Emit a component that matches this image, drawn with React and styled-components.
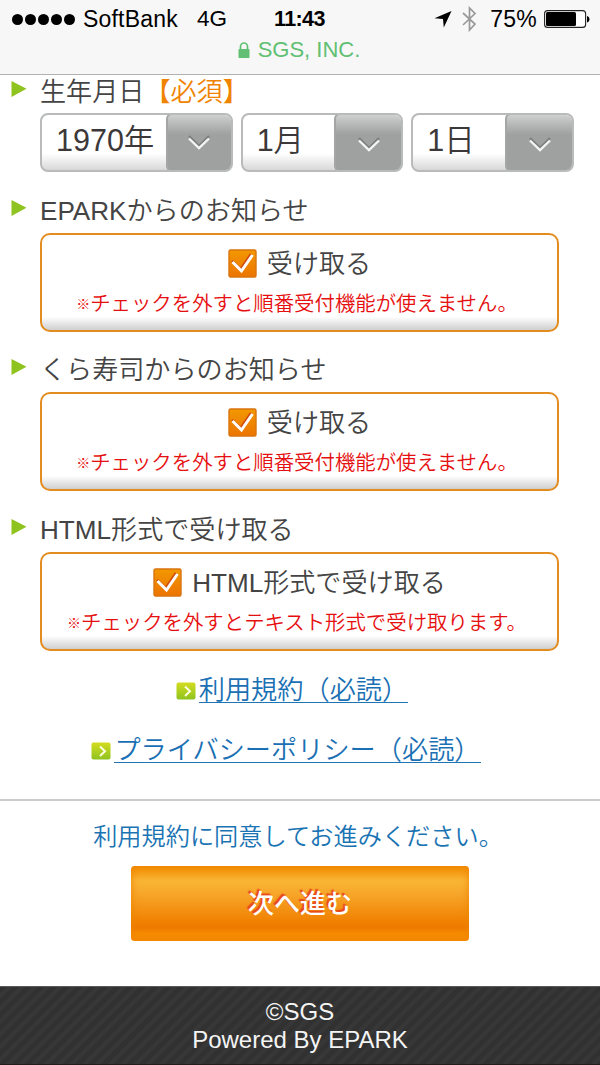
import React from 'react'
import styled, { createGlobalStyle } from 'styled-components'

const GlobalStyle = createGlobalStyle`
* {
  box-sizing: border-box;
}
body {
  margin: 0;
  background: #fff;
  color: #444;
  font-family: "Liberation Sans", "Noto Sans CJK JP", sans-serif;
  font-weight: 350;
}
`

const Page = styled.div`
width: 600px;
height: 1065px;
display: flex;
flex-direction: column;
overflow: hidden;
white-space: nowrap;
`

const Header = styled.header`
height: 75px;
flex: none;
background: #f7f7f7;
border-bottom: 1px solid #b2b2b2;
`

const StatusBar = styled.div`
display: grid;
grid-template-columns: 1fr 54px 1fr;
align-items: center;
height: 38px;
padding: 0 10px 0 12px;
color: #000;
font-size: 23px;
`

const StatusGroup = styled.div`
display: flex;
align-items: center;
justify-content: ${(props) => (props.$end ? 'flex-end' : 'flex-start')};
`

const Dots = styled.div`
display: flex;
gap: 2px;
margin-right: 8px;
`

const Dot = styled.span`
width: 11px;
height: 11px;
border-radius: 50%;
background: #000;
`

const Carrier = styled.span`
letter-spacing: 0.2px;
`

const Network = styled.span`
margin-left: 19px;
font-size: 22.5px;
`

const Clock = styled.span`
font-size: 21.5px;
font-weight: bold;
letter-spacing: -0.6px;
`

const Percent = styled.span`
margin: 0 7px 0 13px;
letter-spacing: 0.2px;
`

const BluetoothIcon = styled.svg`
width: 15px;
height: 26px;
margin-left: 10px;
`

const UrlBar = styled.div`
display: flex;
align-items: center;
justify-content: center;
gap: 8px;
height: 24px;
padding-right: 2px;
color: #61c073;
font-size: 22px;
`

const Main = styled.main`
flex: 1;
display: flex;
flex-direction: column;
`

const Field = styled.section`
height: ${(props) => props.$height}px;
padding: 0 26px 0 40px;
`

const Label = styled.h2`
display: flex;
align-items: center;
height: 34px;
margin: 0 0 0 -29px;
font-size: 26.1px;
font-weight: 350;
line-height: 30px;
`

const Marker = styled.svg`
width: 16px;
height: 18px;
margin: -6px 13px 0 0;
`

const Required = styled.span`
color: #f08300;
`

const Selects = styled.div`
display: flex;
gap: 8px;
margin-top: 4px;
`

const Select = styled.button`
display: flex;
justify-content: space-between;
width: ${(props) => props.$width}px;
height: 59px;
padding: 0;
overflow: hidden;
border: 2px solid #b9baba;
border-radius: 8px;
background: linear-gradient(#fff 0, #fff 70%, #d8d8d8 100%);
color: #3c3839;
font-family: inherit;
font-size: 30.5px;
font-weight: 350;
line-height: 51px;
text-align: left;
`

const SelectText = styled.span`
padding-left: 14px;
`

const SelectArrow = styled.span`
display: flex;
align-items: center;
justify-content: center;
width: ${(props) => props.$width}px;
height: 59px;
margin: -2px;
padding-top: ${(props) => props.$drop}px;
flex: none;
border: 2px solid #a4a6a5;
border-radius: 6px;
background: linear-gradient(#d0d0d0 0, #b5b6b6 18%, #9fa1a0 36%, #9fa1a0 100%);
`

const Box = styled.div`
display: flex;
flex-direction: column;
align-items: center;
width: 519px;
height: 99px;
margin-top: 5px;
padding-top: 11px;
border: 2px solid #e38c20;
border-radius: 10px;
background: linear-gradient(#fff 0, #fff 86%, #cfcfcf 100%);
`

const CheckLine = styled.label`
display: flex;
align-items: center;
gap: 10px;
height: 36px;
font-size: 26.1px;
line-height: 30px;
`

const CheckMark = styled.svg`
width: 29px;
height: 29px;
margin-top: -2px;
`

const Note = styled.p`
display: flex;
align-items: center;
height: 30px;
margin: 5px 5px 0 0;
color: #e60f0f;
font-size: 20.4px;
`

const NoteMark = styled.span`
width: 14px;
padding-top: 2px;
font-size: 14px;
font-weight: 700;
`

const LinkRow = styled.div`
display: flex;
justify-content: center;
align-items: center;
height: 60px;
padding-right: ${(props) => props.$shift}px;
gap: 3px;
`

const Link = styled.a`
height: 29px;
margin-top: -4px;
border-bottom: 1px solid #1f74b5;
color: #1a70b4;
font-size: 26.2px;
line-height: 33px;
`

const LinkIcon = styled.svg`
width: 20px;
height: 18px;
margin: 1px 0 0 -1px;
`

const Agree = styled.section`
display: flex;
flex-direction: column;
align-items: center;
height: 187px;
margin-top: auto;
border-top: 2px solid #ccc;
`

const AgreeText = styled.p`
height: 36px;
margin: 18px 0 11px;
padding-right: 4px;
color: #1a73b3;
font-size: 24.2px;
line-height: 36px;
`

const NextButton = styled.button`
width: 338px;
height: 75px;
padding: 0;
border: 0;
border-radius: 4px;
background: linear-gradient(#f28c00 0, #f9b535 20%, #f7a82c 35%, #f08000 75%, #ee7a00 82%, #f68b00 90%, #f68b00 100%);
box-shadow: inset 0 0 9px #ef8500;
color: #fff;
font-family: inherit;
font-size: 26px;
font-weight: 500;
line-height: 74px;
text-shadow: -2px -2px 1px #e8491c;
`

const Footer = styled.footer`
height: 79px;
flex: none;
padding-top: 11px;
border-top: 1px solid #5a5a5a;
border-bottom: 1px solid #221c1e;
background: repeating-linear-gradient(135deg, #313131 0, #313131 4px, #373737 5px, #373737 8px, #313131 9px);
color: #f4f4f4;
font-size: 24px;
line-height: 28px;
text-align: center;
`

const Chevron = () => (
  <svg width="24" height="20" viewBox="0 0 24 20" fill="none">
    <path d="M2 3l10 10L22 3" stroke="#7d7f7e" strokeWidth="2.4" />
    <path d="M2 5.5l10 9.5L22 5.5" stroke="#f4f4f4" strokeWidth="2.4" />
  </svg>
)

const FieldLabel = ({ children }) => (
  <Label>
    <Marker viewBox="0 0 16 18">
      <path d="M0.5 1L15.5 8.8L0.5 17z" fill="#8fc31f" />
    </Marker>
    <span>{children}</span>
  </Label>
)

const DateSelect = ({ text, width, arrow, drop }) => (
  <Select $width={width}>
    <SelectText>{text}</SelectText>
    <SelectArrow $width={arrow} $drop={drop}>
      <Chevron />
    </SelectArrow>
  </Select>
)

const CheckField = ({ title, text, note, height }) => (
  <Field $height={height}>
    <FieldLabel>{title}</FieldLabel>
    <Box>
      <CheckLine>
        <CheckMark viewBox="0 0 29 29">
          <defs>
            <linearGradient id="check" x1="0" y1="0" x2="0" y2="1">
              <stop offset="0" stopColor="#f39800" />
              <stop offset="1" stopColor="#ec7400" />
            </linearGradient>
          </defs>
          <rect x="1" y="1" width="27" height="27" rx="1.5" fill="url(#check)" stroke="#d9740f" strokeWidth="1.4" />
          <path d="M4 12L12.500 20.500L23 5" fill="none" stroke="#cf4a0c" strokeWidth="2.6" />
          <path d="M4.500 13L13.500 22L24.500 6" fill="none" stroke="#fff" strokeWidth="3" />
        </CheckMark>
        <span>{text}</span>
      </CheckLine>
      <Note>
        <NoteMark>※</NoteMark>
        {note}
      </Note>
    </Box>
  </Field>
)

const IconLink = ({ shift, children }) => (
  <LinkRow $shift={shift}>
    <LinkIcon viewBox="0 0 20 18">
      <defs>
        <linearGradient id="link" x1="0" y1="0" x2="0" y2="1">
          <stop offset="0" stopColor="#d4dc20" />
          <stop offset="1" stopColor="#8ec31f" />
        </linearGradient>
      </defs>
      <rect x="0.5" y="0.5" width="19" height="17" rx="2" fill="url(#link)" />
      <path d="M9 4.5l5 4.8l-5 4.7" fill="none" stroke="#fffde0" strokeWidth="2" />
    </LinkIcon>
    <Link>{children}</Link>
  </LinkRow>
)

const App = () => {
  return (
    <>
      <GlobalStyle />
      <Page>
        <Header>
          <StatusBar>
            <StatusGroup>
              <Dots>
                {[1, 2, 3, 4, 5].map((n) => (
                  <Dot key={n} />
                ))}
              </Dots>
              <Carrier>SoftBank</Carrier>
              <Network>4G</Network>
            </StatusGroup>
            <Clock>11:43</Clock>
            <StatusGroup $end>
              <svg width="18" height="17" viewBox="0 0 18 17">
                <path d="M17.5 0L9.8 16.5L9 8L0.5 7.2z" fill="#000" />
              </svg>
              <BluetoothIcon viewBox="0 0 15 26">
                <path d="M1 7l12 11l-5.5 6V2l5.5 5.5L1 19" fill="none" stroke="#999" strokeWidth="1.7" />
              </BluetoothIcon>
              <Percent>75%</Percent>
              <svg width="46" height="18" viewBox="0 0 46 18">
                <rect x="0.6" y="0.6" width="41" height="16.8" rx="3" fill="#fff" stroke="#222" strokeWidth="1.1" />
                <rect x="2" y="2" width="30" height="14" rx="1.5" fill="#000" />
                <path d="M43 6c3.3 1 3.3 5.5 0 6.5z" fill="#000" />
              </svg>
            </StatusGroup>
          </StatusBar>
          <UrlBar>
            <svg width="12" height="16" viewBox="0 0 12 16">
              <path d="M2.5 8V4.5a3.5 3.5 0 0 1 7 0V8" fill="none" stroke="#61c073" strokeWidth="1.7" />
              <rect x="0.5" y="7" width="11" height="9" rx="0.8" fill="#61c073" />
            </svg>
            <span>SGS, INC.</span>
          </UrlBar>
        </Header>

        <Main>
          <Field $height={119}>
            <FieldLabel>
              生年月日
              <Required>【必須】</Required>
            </FieldLabel>
            <Selects>
              <DateSelect text="1970年" width={193} arrow={67} drop={0} />
              <DateSelect text="1月" width={163} arrow={69} drop={5} />
              <DateSelect text="1日" width={163} arrow={69} drop={5} />
            </Selects>
          </Field>
          <CheckField height={159} title="EPARKからのお知らせ" text="受け取る" note="チェックを外すと順番受付機能が使えません。" />
          <CheckField height={160} title="くら寿司からのお知らせ" text="受け取る" note="チェックを外すと順番受付機能が使えません。" />
          <CheckField height={147} title="HTML形式で受け取る" text="HTML形式で受け取る" note="チェックを外すとテキスト形式で受け取ります。" />
          <IconLink shift={15}>利用規約（必読）</IconLink>
          <IconLink shift={27}>プライバシーポリシー（必読）</IconLink>
          <Agree>
            <AgreeText>利用規約に同意してお進みください。</AgreeText>
            <NextButton>次へ進む</NextButton>
          </Agree>
        </Main>

        <Footer>
          <div>©SGS</div>
          <div>Powered By EPARK</div>
        </Footer>
      </Page>
    </>
  )
}

export default App
